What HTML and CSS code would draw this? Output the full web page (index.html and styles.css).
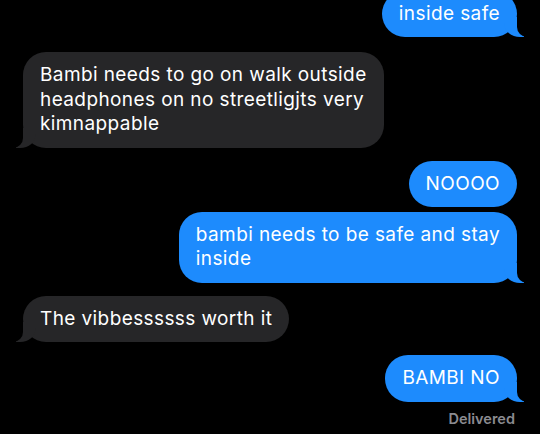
FILE: index.html
```html
<!DOCTYPE html>
<html lang="en">
<head>
    <meta charset="UTF-8">
    <meta name="viewport" content="width=device-width, initial-scale=1.0">
    <title>Messages</title>
    <link rel="stylesheet" href="styles.css">
</head>
<body>
    <div class="thread">
        <div class="bubble sent first tail">inside safe</div>
        <div class="bubble received tail gap-lg">Bambi needs to go on walk outside<br>headphones on no streetligjts very<br>kimnappable</div>
        <div class="bubble sent gap-md">NOOOO</div>
        <div class="bubble sent tail gap-sm">bambi needs to be safe and stay<br>inside</div>
        <div class="bubble received tail gap-md">The vibbessssss worth it</div>
        <div class="bubble sent tail gap-md">BAMBI NO</div>
        <div class="status">Delivered</div>
    </div>
</body>
</html>
```

FILE: styles.css
```css
/* dark message thread */
body {
    margin: 0;
    padding: 0;
    background-color: #000;
    font-family: "Inter", "Liberation Sans", Arial, sans-serif;
    overflow: hidden;
}
.thread {
    display: flex;
    flex-direction: column;
    padding: 0 23px 0 23px;
}
.bubble {
    position: relative;
    max-width: 380px;
    padding: 11px 17px;
    border-radius: 23px;
    font-size: 19px;
    line-height: 24.5px;
    letter-spacing: 0.4px;
    color: #fff;
}
.sent {
    align-self: flex-end;
    background-color: #1d8bfd;
}
.received {
    align-self: flex-start;
    background-color: #262628;
}
.first {
    margin-top: -9.5px;
}
.gap-lg {
    margin-top: 15px;
}
.gap-md {
    margin-top: 13px;
}
.gap-sm {
    margin-top: 4.5px;
}

/* tails on the last bubble of a group */
.tail::before,
.tail::after {
    content: "";
    position: absolute;
    bottom: 0;
    height: 20px;
}
.sent.tail::before {
    right: -7px;
    width: 20px;
    background-color: #1d8bfd;
    border-bottom-left-radius: 16px 14px;
}
.sent.tail::after {
    right: -26px;
    width: 26px;
    background-color: #000;
    border-bottom-left-radius: 10px;
}
.received.tail::before {
    left: -7px;
    width: 20px;
    background-color: #262628;
    border-bottom-right-radius: 16px 14px;
}
.received.tail::after {
    left: -26px;
    width: 26px;
    background-color: #000;
    border-bottom-right-radius: 10px;
}
.status {
    align-self: flex-end;
    margin-top: 9px;
    margin-right: 2px;
    font-size: 14.5px;
    line-height: 16px;
    font-weight: 600;
    color: #8b8b90;
}
```
